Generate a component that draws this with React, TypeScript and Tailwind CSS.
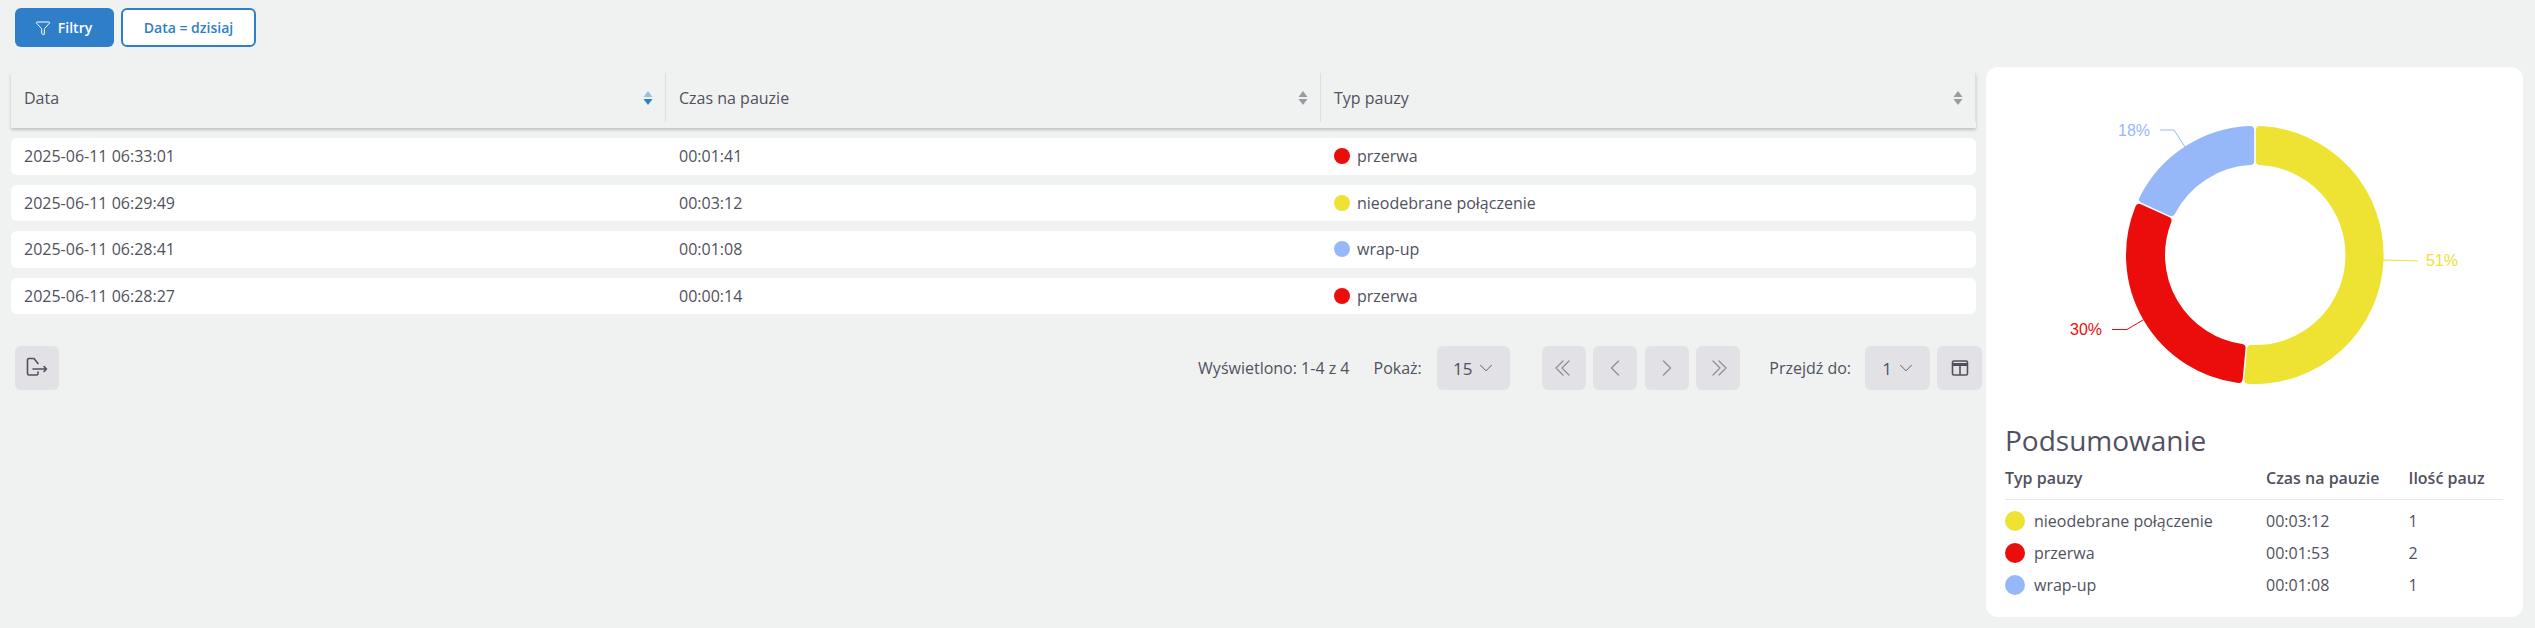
import { ChevronDown, Funnel } from 'lucide-react';
import type { ReactNode } from 'react';

const YELLOW = '#eee232';
const RED = '#eb0c0c';
const BLUE = '#96b8f9';

const rows = [
  { date: '2025-06-11 06:33:01', time: '00:01:41', type: 'przerwa', color: RED },
  { date: '2025-06-11 06:29:49', time: '00:03:12', type: 'nieodebrane połączenie', color: YELLOW },
  { date: '2025-06-11 06:28:41', time: '00:01:08', type: 'wrap-up', color: BLUE },
  { date: '2025-06-11 06:28:27', time: '00:00:14', type: 'przerwa', color: RED },
];

const summary = [
  { type: 'nieodebrane połączenie', time: '00:03:12', count: 1, color: YELLOW },
  { type: 'przerwa', time: '00:01:53', count: 2, color: RED },
  { type: 'wrap-up', time: '00:01:08', count: 1, color: BLUE },
];

// Ring segment with rounded corners: the shape is inset and stroked with a round join
function arcPath(from: number, to: number) {
  const cx = 269;
  const cy = 188;
  const outer = 125;
  const inner = 94;
  const gap = 4.8;
  const point = (r: number, deg: number) => {
    const a = ((deg - 90) * Math.PI) / 180;
    return `${(cx + r * Math.cos(a)).toFixed(2)} ${(cy + r * Math.sin(a)).toFixed(2)}`;
  };
  const padOuter = (gap / outer) * (180 / Math.PI);
  const padInner = (gap / inner) * (180 / Math.PI);
  const large = to - from > 180 ? 1 : 0;
  return [
    `M ${point(outer, from + padOuter)}`,
    `A ${outer} ${outer} 0 ${large} 1 ${point(outer, to - padOuter)}`,
    `L ${point(inner, to - padInner)}`,
    `A ${inner} ${inner} 0 ${large} 0 ${point(inner, from + padInner)}`,
    'Z',
  ].join(' ');
}

function SortIcon({ active }: { active?: boolean }) {
  return (
    <svg width="10" height="16" viewBox="0 0 10 16" className={active ? 'text-[#2f7ec9]' : 'text-[#9a9aa3]'}>
      <path d="M5 1 L9.5 7 H0.5 Z" fill="currentColor" opacity={active ? 0.45 : 1} />
      <path d="M5 15 L9.5 9 H0.5 Z" fill="currentColor" />
    </svg>
  );
}

function HeaderCell({ label, active }: { label: string; active?: boolean }) {
  return (
    <div className="flex h-[49px] items-center justify-between border-r border-[#dcdee0] pl-[13px] pr-[12px]">
      <span>{label}</span>
      <SortIcon active={active} />
    </div>
  );
}

function GrayButton({ className, children }: { className: string; children: ReactNode }) {
  return (
    <button className={`flex h-[44px] items-center justify-center rounded-md bg-[#e1e1e6] text-[#51515e] ${className}`}>
      {children}
    </button>
  );
}

function PageIcon({ d }: { d: string }) {
  return (
    <svg width="24" height="24" viewBox="0 0 24 24" fill="none" stroke="#8e8e97" strokeWidth="1.3" strokeLinecap="round" strokeLinejoin="round">
      <path d={d} />
    </svg>
  );
}

function App() {
  return (
    <div className="flex h-[628px] w-[2535px] overflow-hidden bg-[#f0f2f2] font-['Open_Sans',sans-serif] text-[16px] text-[#51515e]">
      <div className="w-[1976px] shrink-0 pl-[11px]">
        {/* Filters */}
        <div className="flex gap-[7px] pl-[4px] pt-[8px]">
          <button className="flex h-[39px] w-[99px] items-center justify-center gap-[7px] rounded-md bg-[#2f7ec9] pr-[2px] text-[14px] font-semibold text-white">
            <Funnel className="h-[16px] w-[16px]" strokeWidth={1.5} />
            Filtry
          </button>
          <button className="h-[39px] w-[135px] rounded-md border-2 border-[#2f7ec9] bg-white text-[14px] font-semibold text-[#2f7ec9]">
            Data = dzisiaj
          </button>
        </div>

        {/* Table */}
        <div className="mt-[26px] grid grid-cols-3 pb-[6px] shadow-[0_2px_3px_rgba(0,0,0,0.2)]">
          <HeaderCell label="Data" active />
          <HeaderCell label="Czas na pauzie" />
          <HeaderCell label="Typ pauzy" />
        </div>
        <div className="mt-[10px] flex flex-col gap-[10px]">
          {rows.map((row) => (
            <div key={row.date} className="grid h-[36.6px] grid-cols-3 items-center rounded-md bg-white">
              <span className="pl-[13px]">{row.date}</span>
              <span className="pl-[13px]">{row.time}</span>
              <span className="flex items-center gap-[7px] pl-[13px]">
                <span className="h-[16px] w-[16px] rounded-full" style={{ backgroundColor: row.color }} />
                {row.type}
              </span>
            </div>
          ))}
        </div>

        {/* Footer */}
        <div className="-mr-[6px] mt-[32px] flex items-center pl-[4px]">
          <GrayButton className="w-[44px]">
            <svg width="22" height="22" viewBox="0 0 22 22" fill="none" stroke="currentColor" strokeWidth="1.6" strokeLinecap="round" strokeLinejoin="round">
              <path d="M12 6.5 L8 1.5 H3 A1.5 1.5 0 0 0 1.5 3 V16.5 A1.5 1.5 0 0 0 3 18 H10.5 A1.5 1.5 0 0 0 12 16.5 V15" />
              <path d="M7 12 H20.5 M18 9.5 L20.5 12 L18 14.5" />
            </svg>
          </GrayButton>
          <span className="ml-auto">Wyświetlono: 1-4 z 4</span>
          <span className="ml-[24px]">Pokaż:</span>
          <GrayButton className="ml-[15px] w-[73px] gap-[3px] pl-[4px] text-[17px]">
            15 <ChevronDown className="h-[22px] w-[22px]" strokeWidth={1} />
          </GrayButton>
          <div className="ml-[32px] flex gap-[7.5px]">
            <GrayButton className="w-[44px]"><PageIcon d="M11 5 L4 12 L11 19 M17 5 L10 12 L17 19" /></GrayButton>
            <GrayButton className="w-[44px]"><PageIcon d="M15.5 5 L8.5 12 L15.5 19" /></GrayButton>
            <GrayButton className="w-[44px]"><PageIcon d="M8.5 5 L15.5 12 L8.5 19" /></GrayButton>
            <GrayButton className="w-[44px]"><PageIcon d="M7 5 L14 12 L7 19 M13 5 L20 12 L13 19" /></GrayButton>
          </div>
          <span className="ml-[29px]">Przejdź do:</span>
          <GrayButton className="ml-[14px] w-[65px] gap-[3px] pl-[4px] text-[17px]">
            1 <ChevronDown className="h-[22px] w-[22px]" strokeWidth={1} />
          </GrayButton>
          <GrayButton className="ml-[7px] w-[45px] shrink-0">
            <svg width="18" height="18" viewBox="0 0 18 18" fill="none" stroke="currentColor" strokeWidth="1.6">
              <rect x="1.5" y="2" width="15" height="14" rx="1.5" />
              <path d="M1.5 5.5 H16.5" strokeWidth="3" />
              <path d="M9 5 V16" />
            </svg>
          </GrayButton>
        </div>
      </div>

      {/* Summary card */}
      <div className="ml-[10px] mt-[67px] h-[550px] w-[537px] rounded-xl bg-white">
        <svg width="537" height="354" viewBox="0 0 537 354" className="block font-['Liberation_Sans',sans-serif] text-[16px]">
          <g strokeWidth="8" strokeLinejoin="round">
            <path d={arcPath(0, 185.3)} fill={YELLOW} stroke={YELLOW} />
            <path d={arcPath(185.3, 294.3)} fill={RED} stroke={RED} />
            <path d={arcPath(294.3, 360)} fill={BLUE} stroke={BLUE} />
          </g>
          <g fill="none" strokeWidth="1">
            <path d="M397 193 L432 194" stroke={YELLOW} />
            <path d="M126 262.5 H141 L157 253" stroke={RED} />
            <path d="M174 63 H188 L199 80" stroke={BLUE} />
          </g>
          <text x="440" y="199" fill={YELLOW}>51%</text>
          <text x="84" y="268" fill={RED}>30%</text>
          <text x="132" y="69" fill={BLUE}>18%</text>
        </svg>
        <div className="pl-[19px] pr-[20px]">
          <h2 className="text-[28px] leading-[38px]">Podsumowanie</h2>
          <div className="mt-[4px] grid h-[37px] grid-cols-[261px_142.5px_1fr] items-center border-b border-[#e5e7eb] pb-[6px] font-semibold">
            <span>Typ pauzy</span>
            <span>Czas na pauzie</span>
            <span>Ilość pauz</span>
          </div>
          <div className="mt-[5px]">
            {summary.map((item) => (
              <div key={item.type} className="grid h-[32px] grid-cols-[261px_142.5px_1fr] items-center">
                <span className="flex items-center gap-[9px]">
                  <span className="h-[20px] w-[20px] rounded-full" style={{ backgroundColor: item.color }} />
                  {item.type}
                </span>
                <span>{item.time}</span>
                <span>{item.count}</span>
              </div>
            ))}
          </div>
        </div>
      </div>
    </div>
  );
}

export default App;
